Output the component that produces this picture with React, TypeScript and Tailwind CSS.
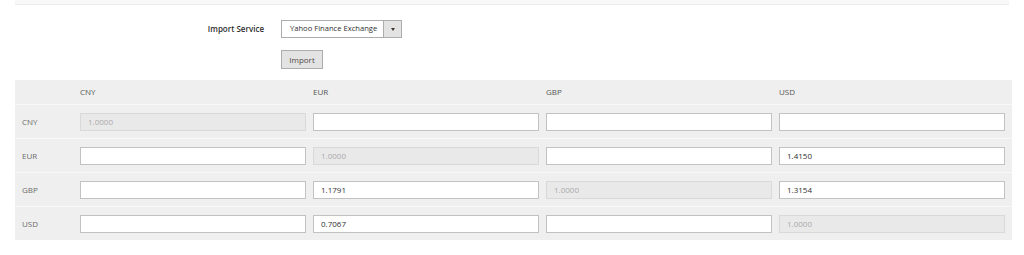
import React from "react";

const cur = ["CNY", "EUR", "GBP", "USD"];
const data: Record<string, Record<string, string>> = {
  CNY: { CNY: "1.0000", EUR: "", GBP: "", USD: "" },
  EUR: { CNY: "", EUR: "1.0000", GBP: "", USD: "1.4150" },
  GBP: { CNY: "", EUR: "1.1791", GBP: "1.0000", USD: "1.3154" },
  USD: { CNY: "", EUR: "0.7067", GBP: "", USD: "1.0000" },
};

export default function App() {
  return (
    <div
      className="w-[1024px] h-[255px] bg-white overflow-hidden text-[8px] text-[#41362f]"
      style={{ fontFamily: '"Open Sans", "Liberation Sans", sans-serif' }}
    >
      <div className="mx-[15px] h-[5px] bg-[#f8f8f8] border-b border-[#ececec]" />
      <div className="flex items-start mt-[15px]">
        <div className="w-[264px] h-[18px] flex items-center justify-end font-semibold text-[#303030]">
          Import Service
        </div>
        <div className="ml-[17px] flex flex-col gap-[12px]">
          <div className="flex w-[121px] h-[18px] border border-[#adadad] bg-white">
            <div className="flex-1 flex items-center pl-[8px] text-[7.6px] text-[#303030] whitespace-nowrap overflow-hidden">
              Yahoo Finance Exchange
            </div>
            <div className="w-[18px] bg-[#e3e3e3] border-l border-[#adadad] flex items-center justify-center">
              <div className="w-0 h-0 border-l-[2.5px] border-r-[2.5px] border-t-[3px] border-l-transparent border-r-transparent border-t-[#41362f]" />
            </div>
          </div>
          <div className="w-[42px] h-[19px] bg-[#e3e3e3] border border-[#adadad] flex items-center justify-center text-[#514943]">
            Import
          </div>
        </div>
      </div>
      <div className="mx-[15px] mt-[11px] w-[997px] bg-[#efefef]">
        <div className="flex h-[24px] items-center text-[#555]">
          <div className="w-[65px]" />
          <div className="flex gap-[7px]">
            {cur.map((c) => (
              <div key={c} className="w-[226px]">
                {c}
              </div>
            ))}
          </div>
        </div>
        {cur.map((r) => (
          <div key={r} className="flex h-[34px] items-center border-t border-[#f8f8f8]">
            <div className="w-[65px] pl-[7px] text-[#6b6b6b]">{r}</div>
            <div className="flex gap-[7px]">
              {cur.map((c) => {
                const dis = r === c;
                return (
                  <div
                    key={c}
                    className={
                      dis
                        ? "w-[226px] h-[18px] border border-[#d9d9d9] bg-[#e9e9e9] text-[#aaa] flex items-center pl-[7px]"
                        : "w-[226px] h-[18px] border border-[#c2c2c2] bg-white text-[#303030] flex items-center pl-[7px]"
                    }
                  >
                    {data[r][c]}
                  </div>
                );
              })}
            </div>
          </div>
        ))}
      </div>
    </div>
  );
}
